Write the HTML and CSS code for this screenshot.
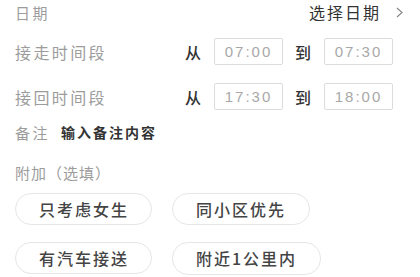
FILE: index.html
```html
<!doctype html>
<html lang="zh-cn">
<head>
<meta charset="UTF-8">
<title>接送设置</title>
<link rel="stylesheet" href="styles.css">
</head>
<body>
<div class="form">
	<div class="row row_date">
		<span class="label">日期</span>
		<span class="pick">选择日期<svg class="arrow" width="7" height="11" viewBox="0 0 7 11"><polyline points="1,1 6,5.5 1,10" fill="none" stroke="#888" stroke-width="1.2"/></svg></span>
	</div>
	<div class="row row_time first">
		<span class="label label_time">接走时间段</span>
		<span class="word">从</span><span class="box">07:00</span>
		<span class="word">到</span><span class="box">07:30</span>
	</div>
	<div class="row row_time">
		<span class="label label_time">接回时间段</span>
		<span class="word">从</span><span class="box">17:30</span>
		<span class="word">到</span><span class="box">18:00</span>
	</div>
	<div class="row row_note">
		<span class="label">备注</span>
		<span class="note">输入备注内容</span>
	</div>
	<div class="row row_extra">
		<span class="label">附加（选填）</span>
	</div>
	<div class="chips">
		<span class="chip">只考虑女生</span>
		<span class="chip">同小区优先</span>
		<span class="chip">有汽车接送</span>
		<span class="chip wide">附近1公里内</span>
	</div>
</div>
</body>
</html>
```
FILE: styles.css
```css
html,body {margin: 0;padding: 0;background: #fff;}
body {font-family: "Noto Sans CJK SC", "Noto Sans", sans-serif;color: #333;}

.form {padding: 0 17px 0 15px;}
.row {display: flex;align-items: center;}
.label {font-size: 16px;letter-spacing: 2.4px;color: #9c9c9c;white-space: nowrap;}

/* 日期 */
.row_date {height: 24px;justify-content: space-between;}
.row_date .label {font-size: 15px;letter-spacing: 2.5px;}
.pick {display: flex;align-items: center;font-size: 16px;letter-spacing: 2px;color: #333;}
.pick .arrow {margin-left: 15px;}

/* 时间段 */
.row_time {height: 27px;margin-top: 18px;}
.row_time.first {margin-top: 14px;}
.label_time {width: 170px;}
.word {width: 17px;font-size: 16px;font-weight: 500;color: #333;line-height: 1;}
.box {box-sizing: border-box;width: 69px;height: 27px;margin: 0 12px;border: 1px solid #dcdcdc;border-radius: 2px;font-family: "Liberation Sans", sans-serif;font-size: 15px;letter-spacing: 2px;line-height: 25px;text-align: center;color: #a8a8a8;}
.box:last-child {margin-right: 0;}

/* 备注 */
.row_note {height: 20px;margin-top: 12px;}
.row_note .label {font-size: 15px;letter-spacing: 2.5px;}
.note {margin-left: 11px;font-size: 14px;font-weight: bold;letter-spacing: 2px;color: #333;}
.row_extra {height: 20px;margin-top: 20px;}
.row_extra .label {font-size: 15px;letter-spacing: 1px;}

/* 附加选项 */
.chips {display: grid;grid-template-columns: 137px auto;justify-content: start;justify-items: start;column-gap: 20px;row-gap: 17px;margin-top: 11px;}
.chip {box-sizing: border-box;height: 32px;padding: 0 23px;border: 1px solid #e6e6e6;border-radius: 16px;font-size: 16px;font-weight: 500;letter-spacing: 2px;line-height: 30px;color: #444;white-space: nowrap;text-align: center;}
.chip:first-child,.chip:nth-child(3) {width: 137px;}
.chip.wide {height: 33px;}
```
